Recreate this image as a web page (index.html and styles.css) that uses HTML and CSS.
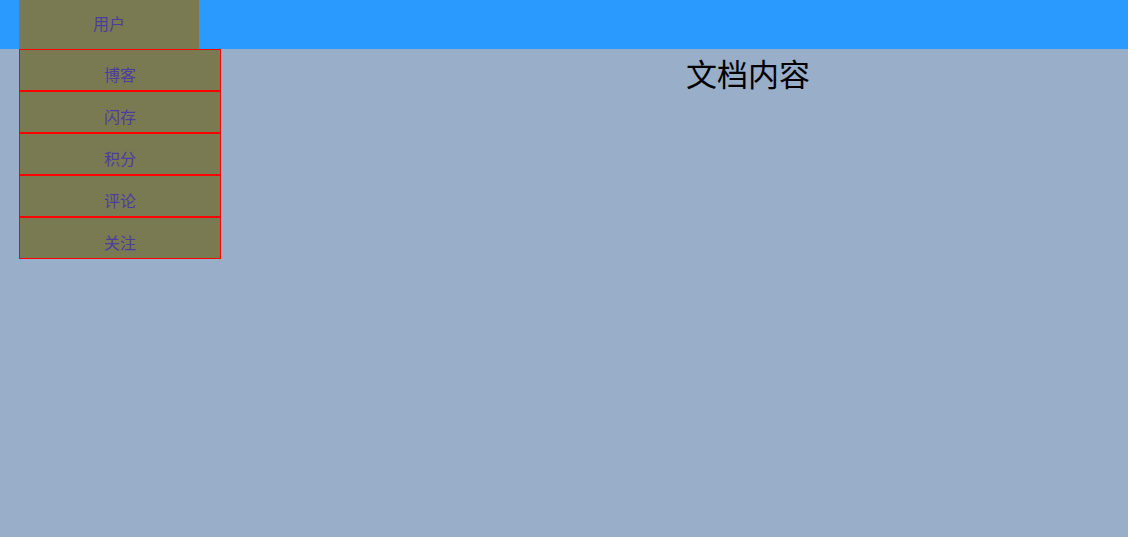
FILE: index.html
```html
<!DOCTYPE html>
<html lang="zh">
<head>
<meta charset="utf-8">
<title>文档</title>
<link rel="stylesheet" href="styles.css">
</head>
<body>
<header class="topbar">
  <div class="nav-item">
    <span class="nav-label">用户</span>
    <ul class="dropdown">
      <li>博客</li>
      <li>闪存</li>
      <li>积分</li>
      <li>评论</li>
      <li>关注</li>
    </ul>
  </div>
</header>
<main class="content">
  <h1 class="title">文档内容</h1>
</main>
</body>
</html>
```

FILE: styles.css
```css
html, body {
  margin: 0;
  padding: 0;
  height: 100%;
}
body {
  background: #98aec9;
  font-family: "Noto Sans CJK SC", "Noto Sans", sans-serif;
}
.topbar {
  height: 49px;
  background: #2a9aff;
  padding-left: 19px;
  display: flex;
}
.nav-item {
  position: relative;
  box-sizing: border-box;
  width: 180px;
  height: 49px;
  padding-bottom: 3px;
  background: #7a7a52;
  color: #4b3d9e;
  font-size: 16px;
  display: flex;
  align-items: center;
  justify-content: center;
}
.dropdown {
  position: absolute;
  top: 49px;
  left: 0;
  margin: 0;
  padding: 0;
  list-style: none;
  width: 202px;
}
.dropdown li {
  box-sizing: border-box;
  height: 42px;
  border: 1px solid #ff0000;
  background: #7a7a52;
  color: #4b3d9e;
  font-size: 16px;
  text-align: center;
  padding-top: 9px;
  line-height: 30px;
}
.content {
  padding-left: 368px;
}
.title {
  margin: 2px 0 0;
  text-align: center;
  font-size: 31px;
  font-weight: normal;
  color: #000;
  line-height: 44px;
}
```
